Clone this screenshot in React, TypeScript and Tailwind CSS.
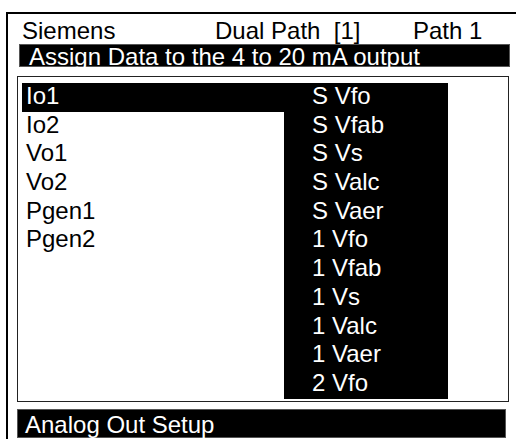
const LEFT_ITEMS = ['Io1', 'Io2', 'Vo1', 'Vo2', 'Pgen1', 'Pgen2']

const RIGHT_ITEMS = [
  'S Vfo',
  'S Vfab',
  'S Vs',
  'S Valc',
  'S Vaer',
  '1 Vfo',
  '1 Vfab',
  '1 Vs',
  '1 Valc',
  '1 Vaer',
  '2 Vfo',
]

export default function App() {
  return (
    <div className="w-[516px] h-[439px] overflow-hidden bg-white text-black font-['Liberation_Sans',Arial,sans-serif] text-[24px]">
      <div className="ml-[6px] mt-[12px] w-[530px] h-[440px] border-l-2 border-t-2 border-black pl-[11px]">
        {/* Header line */}
        <div className="flex h-[30px] items-center pt-[3px] leading-none whitespace-pre">
          <span className="w-[196px] pl-[3px]">Siemens</span>
          <span className="w-[198px]">Dual Path  [1]</span>
          <span>Path 1</span>
        </div>

        {/* Title bar */}
        <div className="w-[491px] h-[23px] bg-black text-white pl-[9px] leading-[24px] border border-[#555]">
          Assign Data to the 4 to 20 mA output
        </div>

        {/* Selection list */}
        <div className="mt-[9px] -ml-[2px] w-[492px] h-[326px] border border-[#222] pt-[6px] pl-[4px] flex">
          <div className="w-[262px]">
            {LEFT_ITEMS.map((item, i) => (
              <div
                key={item}
                className={`h-[28.7px] leading-[26px] pl-[4px] ${i === 0 ? 'bg-black text-white' : ''}`}
              >
                {item}
              </div>
            ))}
          </div>
          <div className="w-[164px] h-[316px] bg-black text-white pl-[28px]">
            {RIGHT_ITEMS.map(item => (
              <div key={item} className="h-[28.7px] leading-[26px]">
                {item}
              </div>
            ))}
          </div>
        </div>

        {/* Status bar */}
        <div className="mt-[7px] -ml-[2px] w-[489px] h-[29px] bg-black text-white pl-[7px] leading-[29px] border border-[#555]">
          Analog Out Setup
        </div>
      </div>
    </div>
  )
}
